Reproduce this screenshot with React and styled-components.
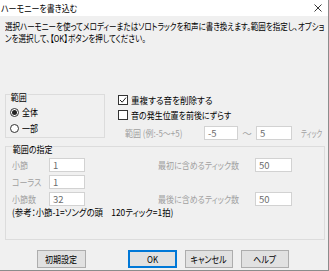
import React from 'react';
import styled, { createGlobalStyle, css } from 'styled-components';

const GlobalStyle = createGlobalStyle`
  html, body {
    margin: 0;
    padding: 0;
    background: #ffffff;
  }
  body {
    font-family: "Noto Sans CJK JP", "Noto Sans", sans-serif;
    font-feature-settings: "palt";
    font-size: 9.5px;
    color: #000;
  }
`;

// the dialog font is narrower than Noto, squeeze text horizontally
const narrow = css`
  display: inline-block;
  white-space: nowrap;
  transform: scaleX(${p => p.$sx || 0.84});
  transform-origin: left center;
`;

const Window = styled.div`
  width: 329px;
  height: 271px;
  box-sizing: border-box;
  border-right: 1px solid #8c8c8c;
  border-bottom: 1px solid #8c8c8c;
  display: flex;
  flex-direction: column;
  overflow: hidden;
`;

const TitleBar = styled.div`
  height: 16px;
  flex: none;
  background: #ffffff;
  display: flex;
  align-items: center;
  justify-content: space-between;
  padding: 0 6px 0 1px;
`;

const Title = styled.span`
  ${narrow};
  line-height: 12px;
`;

const Body = styled.div`
  flex: 1;
  background: #f0f0f0;
  padding: 4px 4px 0 5px;
  display: flex;
  flex-direction: column;
`;

const Desc = styled.div`
  display: flex;
  flex-direction: column;
  align-items: flex-start;
`;

const Line = styled.span`
  ${narrow};
  line-height: 12px;
`;

const OptionsRow = styled.div`
  margin-top: 50px;
  display: flex;
  align-items: flex-start;
  flex: none;
`;

const Group = styled.div`
  box-sizing: border-box;
  flex: none;
  width: ${p => p.$w}px;
  height: ${p => p.$h}px;
  border: 1px solid #dcdcdc;
  display: flex;
  flex-direction: column;
  align-items: flex-start;
  padding: 0 0 0 4px;
`;

const Legend = styled.span`
  ${narrow};
  margin-top: -4px;
  line-height: 12px;
  padding: 0 1px;
  background: #f0f0f0;
`;

const RadioList = styled.div`
  margin-top: 3px;
  display: flex;
  flex-direction: column;
  gap: 4px;
`;

const OptionRow = styled.label`
  display: flex;
  align-items: center;
  height: 12px;
  gap: 3px;
  margin-top: ${p => p.$top || 0}px;
`;

const Caption = styled.span`
  ${narrow};
  line-height: 12px;
`;

const RadioDot = styled.span`
  box-sizing: border-box;
  flex: none;
  width: 9px;
  height: 9px;
  border: 1px solid #333;
  border-radius: 50%;
  display: flex;
  align-items: center;
  justify-content: center;
  background: #fff;
  &::after {
    content: '';
    width: 5px;
    height: 5px;
    border-radius: 50%;
    background: ${p => (p.$on ? '#222' : 'transparent')};
  }
`;

const CheckBox = styled.span`
  box-sizing: border-box;
  flex: none;
  width: 10px;
  height: 10px;
  border: 1px solid #333;
  background: #fff;
  display: flex;
  align-items: center;
  justify-content: center;
`;

const CheckCol = styled.div`
  margin-left: 13px;
  display: flex;
  flex-direction: column;
`;

const RangeRow = styled.div`
  margin-top: 5px;
  display: flex;
  align-items: center;
  padding-left: 7px;
  color: #a0a0a0;
`;

const RangeLabel = styled.span`
  ${narrow};
  flex: none;
  width: 79px;
`;

const Tilde = styled.span`
  flex: none;
  width: 18px;
  text-align: center;
`;

const Unit = styled.span`
  ${narrow};
  margin-left: 9px;
`;

const Field = styled.div`
  box-sizing: border-box;
  flex: none;
  width: ${p => p.$w}px;
  height: 14px;
  background: #fff;
  border: 1px solid #d2d2d2;
  color: #6d6d6d;
  line-height: 12px;
  padding-left: 3px;
`;

const SpecGroup = styled(Group)`
  margin-top: 6px;
  padding-left: 6px;
`;

const SpecGrid = styled.div`
  margin-top: 3px;
  display: grid;
  grid-template-columns: 37px 36px 73px 97px 37px;
  grid-auto-rows: 14px;
  row-gap: 3px;
  align-items: center;
`;

const GrayLabel = styled.span`
  ${narrow};
  color: #a0a0a0;
  line-height: 12px;
`;

const Note = styled.span`
  ${narrow};
  line-height: 12px;
`;

const ButtonRow = styled.div`
  margin-top: 10px;
  display: flex;
  gap: 8px;
  padding-left: 32px;
  flex: none;
`;

const Button = styled.button`
  box-sizing: border-box;
  width: ${p => p.$w || 48}px;
  height: 18px;
  margin-right: ${p => p.$after || 0}px;
  padding: 0;
  display: flex;
  align-items: center;
  justify-content: center;
  font-family: inherit;
  font-feature-settings: "palt";
  font-size: 9.5px;
  color: #000;
  background: #e1e1e1;
  border: 1px solid ${p => (p.$default ? '#0078d7' : '#adadad')};
  box-shadow: ${p => (p.$default ? 'inset 0 0 0 1px #0078d7' : 'none')};
`;

const ButtonText = styled.span`
  ${narrow};
  transform-origin: center;
`;

function CloseIcon() {
  return (
    <svg width="8" height="8" viewBox="0 0 8 8">
      <path d="M0.5 0.5 L7.5 7.5 M7.5 0.5 L0.5 7.5" stroke="#222" strokeWidth="0.9" fill="none" />
    </svg>
  );
}

function Check({ on }) {
  return (
    <CheckBox>
      {on && (
        <svg width="8" height="8" viewBox="0 0 8 8">
          <path d="M1 4 L3.2 6.2 L7 1.6" stroke="#222" strokeWidth="1" fill="none" />
        </svg>
      )}
    </CheckBox>
  );
}

export default function App() {
  return (
    <>
      <GlobalStyle />
      <Window>
        <TitleBar>
          <Title>ハーモニーを書き込む</Title>
          <CloseIcon />
        </TitleBar>
        <Body>
          <Desc>
            <Line $sx={0.79}>選択ハーモニーを使ってメロディーまたはソロトラックを和声に書き換えます。範囲を指定し、オプショ</Line>
            <Line $sx={0.79}>ンを選択して、【OK】ボタンを押してください。</Line>
          </Desc>

          <OptionsRow>
            <Group $w={100} $h={44}>
              <Legend>範囲</Legend>
              <RadioList>
                <OptionRow>
                  <RadioDot $on />
                  <Caption>全体</Caption>
                </OptionRow>
                <OptionRow>
                  <RadioDot />
                  <Caption>一部</Caption>
                </OptionRow>
              </RadioList>
            </Group>

            <CheckCol>
              <OptionRow>
                <Check on />
                <Caption $sx={0.9}>重複する音を削除する</Caption>
              </OptionRow>
              <OptionRow $top={3}>
                <Check />
                <Caption>音の発生位置を前後にずらす</Caption>
              </OptionRow>
              <RangeRow>
                <RangeLabel>範囲 (例:-5〜+5)</RangeLabel>
                <Field $w={34}>-5</Field>
                <Tilde>〜</Tilde>
                <Field $w={36}>5</Field>
                <Unit $sx={0.68}>ティック</Unit>
              </RangeRow>
            </CheckCol>
          </OptionsRow>

          <SpecGroup $w={320} $h={94}>
            <Legend>範囲の指定</Legend>
            <SpecGrid>
              <GrayLabel>小節</GrayLabel>
              <Field $w={36}>1</Field>
              <span />
              <GrayLabel>最初に含めるティック数</GrayLabel>
              <Field $w={37}>50</Field>

              <GrayLabel>コーラス</GrayLabel>
              <Field $w={36}>1</Field>
              <span />
              <span />
              <span />

              <GrayLabel>小節数</GrayLabel>
              <Field $w={36}>32</Field>
              <span />
              <GrayLabel>最後に含めるティック数</GrayLabel>
              <Field $w={37}>50</Field>
            </SpecGrid>
            <Note $sx={0.88}>(参考：小節-1=ソングの頭　120ティック=1拍)</Note>
          </SpecGroup>

          <ButtonRow>
            <Button $w={49} $after={34}><ButtonText>初期設定</ButtonText></Button>
            <Button $w={49} $default><ButtonText>OK</ButtonText></Button>
            <Button><ButtonText>キャンセル</ButtonText></Button>
            <Button><ButtonText>ヘルプ</ButtonText></Button>
          </ButtonRow>
        </Body>
      </Window>
    </>
  );
}
